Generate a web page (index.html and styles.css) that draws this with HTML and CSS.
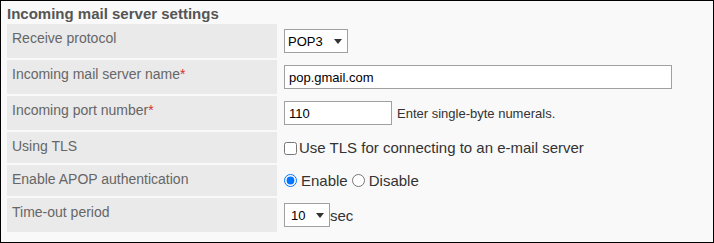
FILE: index.html
```html
<!DOCTYPE html>
<html lang="en">
<head>
<meta charset="utf-8">
<title>Incoming mail server settings</title>
<link rel="stylesheet" href="styles.css">
</head>
<body>
<div class="panel">
  <div class="title">Incoming mail server settings</div>
  <div class="form">
    <div class="label">Receive protocol</div>
    <div class="value">
      <span class="sel"><select class="select select-pop"><option>POP3</option><option>IMAP</option></select></span>
    </div>

    <div class="label">Incoming mail server name<span class="req">*</span></div>
    <div class="value">
      <input class="text text-wide" type="text" value="pop.gmail.com">
    </div>

    <div class="label">Incoming port number<span class="req">*</span></div>
    <div class="value">
      <input class="text text-port" type="text" value="110">
      <span class="note">Enter single-byte numerals.</span>
    </div>

    <div class="label">Using TLS</div>
    <div class="value">
      <input class="check" type="checkbox" id="tls">
      <label for="tls">Use TLS for connecting to an e-mail server</label>
    </div>

    <div class="label">Enable APOP authentication</div>
    <div class="value">
      <input class="radio" type="radio" name="apop" id="apop-on" checked>
      <label for="apop-on">Enable</label>
      <input class="radio radio-second" type="radio" name="apop" id="apop-off">
      <label for="apop-off">Disable</label>
    </div>

    <div class="label">Time-out period</div>
    <div class="value">
      <span class="sel"><select class="select select-time"><option>10</option><option>30</option><option>60</option></select></span>
      <span>sec</span>
    </div>
  </div>
</div>
</body>
</html>
```

FILE: styles.css
```css
html, body {
  margin: 0;
  padding: 0;
}

body {
  font-family: "Liberation Sans", Arial, sans-serif;
}

.panel {
  box-sizing: border-box;
  width: 714px;
  height: 243px;
  border: 1px solid #000;
  background: #f9f9f9;
  padding: 4px 6px 0 6px;
}

.title {
  font-size: 15px;
  font-weight: bold;
  color: #555;
  line-height: 17px;
  height: 19px;
}

.form {
  display: grid;
  grid-template-columns: 270px 1fr;
  grid-template-rows: 34px 34px 34px 31px 31px 34px;
  gap: 2px;
}

.label {
  background: #eaeaea;
  color: #666;
  font-size: 14px;
  line-height: 16px;
  padding: 6px 5px 0 5px;
}

.req {
  color: #d9302c;
}

.value {
  display: flex;
  align-items: center;
  padding: 5px;
  font-size: 15px;
  line-height: 21px;
  color: #333;
}

.sel {
  position: relative;
  display: inline-block;
  height: 24px;
}

.sel::after {
  content: "";
  position: absolute;
  right: 6px;
  top: 10px;
  width: 0;
  height: 0;
  border-left: 4.5px solid transparent;
  border-right: 4.5px solid transparent;
  border-top: 5px solid #333;
  pointer-events: none;
}

.select {
  appearance: none;
  -webkit-appearance: none;
  box-sizing: border-box;
  height: 24px;
  margin: 0;
  border: 1px solid #a0a0a0;
  border-radius: 0;
  background: #fff;
  font-family: "Liberation Sans", Arial, sans-serif;
  font-size: 13px;
  color: #000;
  outline: none;
}

.select-pop {
  width: 64px;
  padding: 0 0 0 3px;
}

.select-time {
  width: 46px;
  padding: 0 0 0 6px;
}

.text {
  box-sizing: border-box;
  height: 24px;
  margin: 0;
  border: 1px solid #a0a0a0;
  border-radius: 0;
  background: #fff;
  padding: 0 4px;
  font-family: "Liberation Sans", Arial, sans-serif;
  font-size: 13px;
  color: #000;
  outline: none;
}

.text-wide {
  width: 388px;
}

.text-port {
  width: 108px;
}

.note {
  margin-left: 5px;
  font-size: 13px;
  line-height: 15px;
  color: #333;
}

.check {
  width: 13px;
  height: 13px;
  margin: 2px 2px 0 0;
}

.radio {
  width: 13px;
  height: 13px;
  margin: 0 4px 0 0;
}

.radio-second {
  margin-left: 4px;
}
```
